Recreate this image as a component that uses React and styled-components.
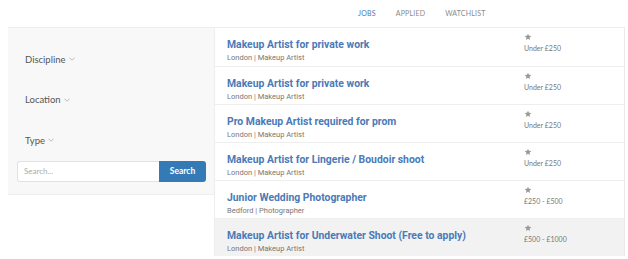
import React from 'react';
import styled, { createGlobalStyle } from 'styled-components';

const Global = createGlobalStyle`
    body {
        margin: 0;
        background: #fff;
        font-family: Lato, "Open Sans", sans-serif;
    }
`

const Page = styled.div`
    padding: 0 3px 0 8px;
`

const Nav = styled.nav`
    height: 27px;
    display: flex;
    align-items: center;
    padding-left: 340px;
    padding-bottom: 1px;
    box-sizing: border-box;
`

const NavItem = styled.a`
    font-size: 7px;
    letter-spacing: 0.2px;
    color: ${p => (p.active ? '#4a7ab8' : '#8a8a8a')};
    padding: 0 10px;
    text-decoration: none;
`

const Container = styled.div`
    display: flex;
    align-items: flex-start;
`

const Sidebar = styled.aside`
    width: 206px;
    box-sizing: border-box;
    background: #f8f8f8;
    border-top: 1px solid #eee;
    border-bottom: 1px solid #efefef;
    padding: 11px 8px 12px 9px;
`

const Filter = styled.div`
    height: 40.5px;
    display: flex;
    align-items: center;
    padding-left: 8px;
    font-size: 9.5px;
    color: #555;
    gap: 3px;
`

const SearchRow = styled.form`
    display: flex;
`

const SearchInput = styled.input`
    flex: 1;
    min-width: 0;
    height: 21px;
    box-sizing: border-box;
    border: 1px solid #e2e2e2;
    border-right: none;
    border-radius: 3px 0 0 3px;
    padding: 0 6px;
    font-family: Lato, sans-serif;
    font-size: 8px;
    color: #555;
    background: #fff;
    outline: none;
    &::placeholder {
        color: #aaa;
    }
`

const SearchButton = styled.button`
    width: 47px;
    height: 21px;
    border: none;
    border-radius: 0 3px 3px 0;
    background: #337ab7;
    color: #fff;
    font-family: Lato, sans-serif;
    font-size: 8.5px;
    font-weight: bold;
    padding: 0;
`

const List = styled.div`
    flex: 1;
    border: 1px solid #eee;
    border-bottom: none;
    border-right: 1px solid #eaeaea;
`

const Row = styled.div`
    height: 38px;
    box-sizing: border-box;
    display: flex;
    border-top: ${p => (p.first ? 'none' : '1px solid #eee')};
    background: ${p => (p.shade ? '#f2f2f2' : '#fff')};
`

const Main = styled.div`
    flex: 1;
    padding: 9px 0 0 12px;
`

const Title = styled.div`
    font-family: Roboto, sans-serif;
    font-weight: bold;
    font-size: 10.4px;
    line-height: 15px;
    color: #4a7ab8;
`

const Sub = styled.div`
    font-family: Roboto, sans-serif;
    font-size: 7.5px;
    line-height: 11px;
    color: #777;
`

const Side = styled.div`
    width: 100px;
    padding-top: 5px;
    display: flex;
    flex-direction: column;
    gap: 3px;
`

const Price = styled.div`
    font-size: 7px;
    color: #777;
`

const Chevron = () => (
    <svg width="6" height="4" viewBox="0 0 6 4">
        <path d="M0.5 0.8 L3 3.2 L5.5 0.8" fill="none" stroke="#aaa" strokeWidth="0.8" />
    </svg>
)

const Star = () => (
    <svg width="8" height="8" viewBox="0 0 24 24">
        <path d="M12 2l2.9 6.6 7.1.6-5.4 4.7 1.6 7L12 17.2 5.8 20.9l1.6-7L2 9.2l7.1-.6z" fill="#999" />
    </svg>
)

const jobs = [
    { title: 'Makeup Artist for private work', place: 'London | Makeup Artist', price: 'Under £250' },
    { title: 'Makeup Artist for private work', place: 'London | Makeup Artist', price: 'Under £250' },
    { title: 'Pro Makeup Artist required for prom', place: 'London | Makeup Artist', price: 'Under £250' },
    { title: 'Makeup Artist for Lingerie / Boudoir shoot', place: 'London | Makeup Artist', price: 'Under £250' },
    { title: 'Junior Wedding Photographer', place: 'Bedford | Photographer', price: '£250 - £500' },
    { title: 'Makeup Artist for Underwater Shoot (Free to apply)', place: 'London | Makeup Artist', price: '£500 - £1000' },
]

export default function App() {
    return (
        <Page>
            <Global />
            <Nav>
                <NavItem active>JOBS</NavItem>
                <NavItem>APPLIED</NavItem>
                <NavItem>WATCHLIST</NavItem>
            </Nav>
            <Container>
                <Sidebar>
                    <Filter>Discipline <Chevron /></Filter>
                    <Filter>Location <Chevron /></Filter>
                    <Filter>Type <Chevron /></Filter>
                    <SearchRow onSubmit={e => e.preventDefault()}>
                        <SearchInput placeholder="Search..." />
                        <SearchButton type="submit">Search</SearchButton>
                    </SearchRow>
                </Sidebar>
                <List>
                    {jobs.map((job, i) => (
                        <Row key={i} first={i === 0} shade={i === jobs.length - 1}>
                            <Main>
                                <Title>{job.title}</Title>
                                <Sub>{job.place}</Sub>
                            </Main>
                            <Side>
                                <Star />
                                <Price>{job.price}</Price>
                            </Side>
                        </Row>
                    ))}
                </List>
            </Container>
        </Page>
    )
}
